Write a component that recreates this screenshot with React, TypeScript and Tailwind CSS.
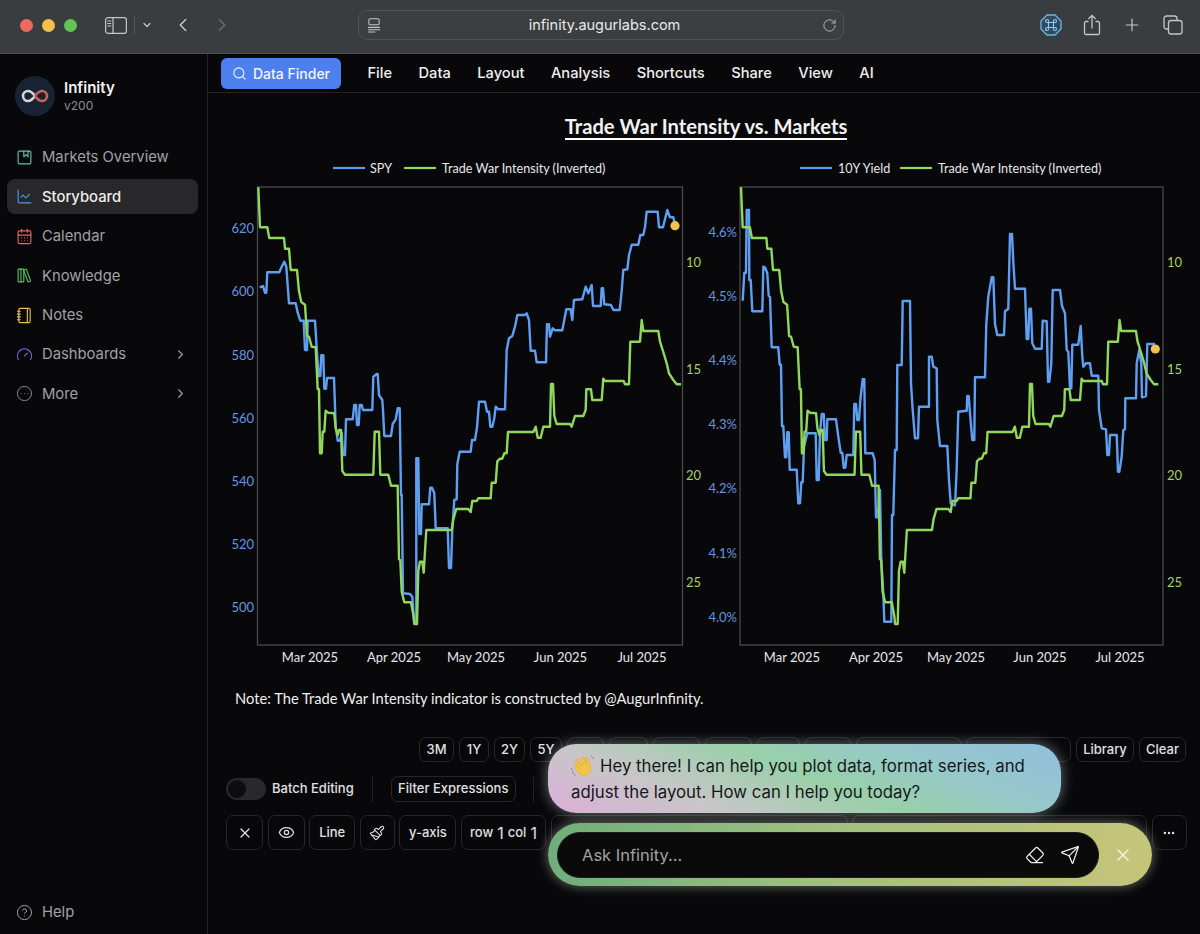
import {
  Album,
  CalendarDays,
  ChartLine,
  ChevronDown,
  ChevronLeft,
  ChevronRight,
  CircleEllipsis,
  CircleHelp,
  Ellipsis,
  Eraser,
  Eye,
  Gauge,
  LibraryBig,
  Notebook,
  Paintbrush,
  Plus,
  RotateCw,
  Search,
  Send,
  X,
} from "lucide-react";
import type { ReactNode } from "react";

// traced from the plots, page coordinates (svg viewBox starts at the chart's page offset)
const tradeWarLeft: [number, number][] = [
  [258.3, 187.3], [260, 227.3], [267.3, 227.3], [269.3, 238], [284, 238], [285, 248.7], [289, 248.7],
  [290.7, 270], [297, 270], [299, 291.3], [301.3, 302], [305, 304.7], [307, 336], [309, 336.7],
  [311.7, 346.7], [315.7, 347.3], [317.7, 389.3], [319, 389.3], [320, 453.3], [321.7, 453.3],
  [322.7, 431.7], [324.3, 431.7], [325.7, 410.7], [328.3, 412.7], [334.3, 413.3], [335.7, 428.3],
  [337.7, 435], [339, 430], [341, 430], [342.3, 471], [345, 474.7], [373.3, 474.7], [374.7, 431.7],
  [379, 431.7], [380.3, 474.7], [388.3, 474.7], [391, 485.7], [397.7, 485.7], [399, 559.3],
  [400.3, 560], [401.7, 591.7], [404.3, 602.3], [411, 602.3], [413.7, 616.7], [414.3, 624], [417, 624],
  [418.3, 570.7], [420, 561.7], [422.3, 561.7], [423.7, 572.7], [426.3, 530], [451.7, 530],
  [453.3, 519.3], [456.3, 509], [468.3, 509], [470.7, 512], [472.3, 501], [476.7, 501], [478.3, 498.3],
  [490.7, 498.3], [491.7, 482.7], [495.7, 482.7], [497.3, 461.3], [500, 458.7], [502.3, 458.7],
  [504.3, 453.3], [506.7, 453.3], [508, 432], [533.3, 432], [535.7, 426.7], [537.7, 437.7],
  [540.7, 437.7], [543.3, 426.7], [550, 426.7], [551, 384], [553, 384], [554.3, 416], [556.7, 424],
  [570, 424], [571.7, 426.7], [575, 416], [583.3, 416], [585.7, 410], [586.3, 389.3], [591, 389.3],
  [592.3, 400], [601.7, 400], [603.3, 378.7], [605, 381], [623.7, 381], [625, 384.3], [629, 384.3],
  [630.3, 341.7], [640, 341.7], [641.7, 320], [643.3, 331], [658.3, 331], [660, 341.7], [663.3, 352],
  [666.7, 363.3], [669, 373.3], [673.3, 380], [676.7, 384.3], [681, 384.3],
];

const tradeWarRight = tradeWarLeft.map(([x, y]): [number, number] => [741 + (x - 258.3) * 0.9873, y]);

const spy: [number, number][] = [
  [259.7, 287.3], [263, 286], [265, 292.7], [266.3, 292.7], [267.3, 272.3], [279.3, 272.3], [281.7, 266.7],
  [284.3, 261.7], [286.3, 266.7], [289, 303.3], [295.7, 303.3], [297.7, 312.7], [300.3, 320.7],
  [303.7, 320.7], [305, 350], [307, 350], [307.7, 320.7], [315, 320.7], [317, 353.3], [318.7, 376],
  [320.3, 376], [321.3, 355.3], [323.3, 355.3], [324.3, 388.7], [326, 388.7], [327, 378], [334, 378],
  [335.7, 426.7], [337.7, 440.7], [340, 440.7], [341.7, 433], [343, 455], [345, 455], [346, 419.3],
  [352.7, 419.3], [354.3, 405], [356, 405], [357, 425], [358.7, 425], [359.7, 405], [361.7, 405],
  [363, 410], [372.3, 410], [373.3, 376.7], [376.7, 374], [377.7, 374], [379, 395], [382.3, 400],
  [383, 410], [384.3, 436], [391, 436], [392.7, 424], [395.7, 419.3], [397.7, 408.3], [399.7, 408.3],
  [401, 495], [401.7, 495], [403, 593.3], [410, 594], [412.3, 596.7], [414, 621.7], [416.3, 624],
  [416.3, 458.3], [418.3, 458.3], [419.3, 534], [421, 534], [421.7, 504.3], [429, 504.3], [430.3, 487.7],
  [432, 487.7], [434.3, 493.3], [435.7, 528.3], [447.7, 528.3], [449, 568], [451, 568], [452.3, 530],
  [454.3, 500], [456.7, 499.3], [457.3, 464.3], [459.7, 451.7], [470.7, 451.7], [472, 440], [475, 440],
  [477, 427.3], [479, 401.7], [485, 401.7], [487, 411.7], [489, 411.7], [490.3, 426.7], [492.3, 426.7],
  [494.3, 418.3], [495.7, 406.7], [498.3, 409.3], [505, 409.3], [506.7, 350], [509, 338.3], [512.3, 336],
  [515, 326.7], [517.3, 315], [525, 315], [526.7, 313.3], [529, 320], [530.7, 350.7], [535, 350.7],
  [536.7, 362.3], [546, 362.3], [547, 324.3], [549, 324.3], [550, 336.7], [552.7, 328.3], [555, 330.3],
  [562.3, 330.3], [564.3, 320], [566.3, 309.3], [570.7, 309.3], [572.3, 320], [574, 300], [582.3, 299.3],
  [585.7, 286.7], [588.3, 293.3], [591.7, 285], [593, 306], [600.7, 306], [601.7, 288.3], [603, 288.3],
  [604.3, 304.3], [611, 305], [613.3, 310], [619.7, 310], [621.7, 290.7], [623.3, 270], [627.3, 269.3],
  [629, 255], [631.7, 244.7], [638.3, 244.7], [640.3, 235], [643.3, 235], [645, 227], [646.7, 211.7],
  [657.7, 211.7], [659, 227.3], [663, 227.3], [667.3, 210], [670, 217.3], [673.3, 217.3], [675, 225],
];

const yield10: [number, number][] = [
  [742.7, 300.7], [744.3, 272.7], [746, 272.7], [746.7, 210], [749, 210], [749.3, 280], [750.7, 280],
  [752.3, 311.3], [762.3, 311.3], [763.3, 266.7], [765, 267.3], [767.3, 273.3], [768.7, 296], [770, 296.7],
  [771.7, 347.3], [778.3, 347.3], [779.7, 364.7], [781, 364.7], [782, 426], [783.3, 426], [785, 457.3],
  [786.3, 457.3], [787.3, 432.3], [788.7, 432.3], [789.7, 469.7], [796.7, 469.7], [798.3, 503.3],
  [800, 503.3], [801.3, 482.3], [802.7, 482.3], [804, 446.7], [807.3, 433.3], [815.7, 433.3], [816.7, 480],
  [818.7, 480], [820, 433.3], [821.7, 414], [823.7, 414], [825, 440], [826.7, 440], [827.3, 419.3],
  [836, 419.3], [838.3, 436.7], [840.7, 452.7], [842.3, 452.7], [843.7, 467.7], [845.3, 467.7],
  [846.7, 455], [853.3, 455], [854.3, 404], [856, 404], [857.3, 420], [859, 420], [860.3, 400],
  [862.7, 379.3], [864.3, 379.3], [865.3, 453.3], [872.7, 453.3], [874.7, 460], [876, 517.3], [878, 517.3],
  [879, 490], [880, 490], [881.3, 560], [883.3, 593.3], [884.3, 621.7], [891.3, 621.7], [892, 515],
  [893.3, 515], [895, 450], [896.7, 450], [897.3, 365], [901.7, 365], [902.7, 301], [910, 301], [911, 383.3],
  [912.7, 410], [915, 438.3], [918, 438.3], [919, 406.7], [929, 406.7], [929, 356.7], [931.7, 356.7],
  [933.3, 366.7], [936.7, 368.3], [937.3, 420], [940, 446], [947.3, 446], [949, 480], [950.7, 503.3],
  [955, 505.3], [956.7, 469], [958.3, 411.7], [966.7, 410.7], [967.3, 396], [968.7, 396], [970, 413.3],
  [972.3, 440], [974.3, 440], [975, 377.3], [985, 377.3], [986.3, 324], [988.3, 296.7], [991.7, 277.3],
  [993.3, 277.3], [995, 324], [997.3, 335], [1004, 335], [1005, 311.3], [1008.3, 308.7], [1010, 234],
  [1012, 234], [1013.3, 262], [1015, 288.7], [1025, 288.7], [1026.7, 339], [1028.3, 339], [1029.3, 308.7],
  [1031, 308.7], [1032.3, 343.3], [1035, 348.7], [1041.7, 348.7], [1042.7, 320.7], [1046.7, 321.3],
  [1048, 381.7], [1049.3, 381.7], [1051.3, 363.3], [1052.7, 290], [1060, 290], [1062, 306], [1065, 313.3],
  [1066.7, 350], [1068.3, 351.7], [1070, 388.3], [1071.3, 388.3], [1072.3, 344.7], [1078.3, 344.7],
  [1080.7, 326], [1082.3, 356.7], [1083.3, 366.7], [1086, 363.3], [1090, 363.3], [1091.7, 375.7],
  [1098.3, 375.7], [1099, 410], [1101.7, 428.3], [1106, 429.3], [1107.3, 455], [1109, 455], [1110, 435],
  [1116.7, 435], [1118, 471.7], [1119.3, 471.7], [1121.7, 456.7], [1123.3, 430], [1125, 429.3],
  [1125.3, 398.3], [1136, 398.3], [1136.7, 363.3], [1139.3, 350], [1141.3, 363.3], [1142, 397.3],
  [1146, 396], [1147.3, 344], [1155, 344],
];

const toPoints = (pts: [number, number][]) => pts.map((p) => p.join(",")).join(" ");

const BLUE = "#5f9ff2";
const GREEN = "#90d75c";

type ChartProps = {
  originX: number;
  plot: [number, number];
  blue: [number, number][];
  green: [number, number][];
  dot: [number, number];
  legend: { label: string; lineX: number; textX: number; greenLineX: number; greenTextX: number };
  leftTicks: [string, number][];
  leftX: number;
  rightX: number;
  monthX: number[];
};

const months = ["Mar 2025", "Apr 2025", "May 2025", "Jun 2025", "Jul 2025"];
const rightTicks: [string, number][] = [["10", 262], ["15", 369], ["20", 475], ["25", 582]];

const Chart = ({ originX, plot, blue, green, dot, legend, leftTicks, leftX, rightX, monthX }: ChartProps) => (
  <svg
    viewBox={`${originX} 150 480 520`}
    className="h-[520px] w-[480px] shrink-0 overflow-visible font-['Lato',sans-serif] text-[13px]"
  >
    <line x1={legend.lineX} x2={legend.lineX + 32} y1="168" y2="168" stroke={BLUE} strokeWidth="2.2" />
    <text x={legend.textX} y="173" fill="#e5e7eb" className="text-[12.6px]">{legend.label}</text>
    <line x1={legend.greenLineX} x2={legend.greenLineX + 32} y1="168" y2="168" stroke={GREEN} strokeWidth="2.2" />
    <text x={legend.greenTextX} y="173" fill="#e5e7eb" className="text-[12.6px]">Trade War Intensity (Inverted)</text>

    <rect x={plot[0]} y="187" width={plot[1] - plot[0]} height="458" fill="none" stroke="#4b4c4e" strokeWidth="1.3" />

    {leftTicks.map(([label, y]) => (
      <text key={label} x={leftX} y={y + 5} textAnchor="end" fill="#6495e0">{label}</text>
    ))}
    {rightTicks.map(([label, y]) => (
      <text key={label} x={rightX} y={y + 5} fill="#a3d165">{label}</text>
    ))}
    {months.map((label, i) => (
      <text key={label} x={monthX[i]} y="662" textAnchor="middle" fill="#e5e7eb">{label}</text>
    ))}

    <polyline points={toPoints(blue)} fill="none" stroke={BLUE} strokeWidth="2.4" strokeLinejoin="round" />
    <polyline points={toPoints(green)} fill="none" stroke={GREEN} strokeWidth="2.4" strokeLinejoin="round" />
    <circle cx={dot[0]} cy={dot[1]} r="4.6" fill="#f2c14e" />
  </svg>
);

const navItems = [
  { label: "Markets Overview", icon: <Album className="h-[17px] w-[17px] text-[#5cc4a6]" strokeWidth={1.6} /> },
  { label: "Storyboard", icon: <ChartLine className="h-[17px] w-[17px] text-[#4d9be6]" strokeWidth={1.6} />, active: true },
  { label: "Calendar", icon: <CalendarDays className="h-[17px] w-[17px] text-[#e4665c]" strokeWidth={1.6} /> },
  { label: "Knowledge", icon: <LibraryBig className="h-[17px] w-[17px] text-[#5ac060]" strokeWidth={1.6} /> },
  { label: "Notes", icon: <Notebook className="h-[17px] w-[17px] text-[#e8c14a]" strokeWidth={1.6} /> },
  { label: "Dashboards", icon: <Gauge className="h-[17px] w-[17px] text-[#7a68f0]" strokeWidth={1.6} />, arrow: true },
  { label: "More", icon: <CircleEllipsis className="h-[17px] w-[17px] text-[#8a8a8a]" strokeWidth={1.4} />, arrow: true },
];

const menuItems = ["File", "Data", "Layout", "Analysis", "Shortcuts", "Share", "View", "AI"];

const Cell = ({ className, children }: { className: string; children?: ReactNode }) => (
  <div
    className={`flex shrink-0 items-center justify-center rounded-[7px] border border-[#26272a] text-[13px] font-medium text-[#e0e0e3] ${className}`}
  >
    {children}
  </div>
);

const Logo = () => (
  <svg viewBox="0 0 40 40" className="h-10 w-10 shrink-0">
    <circle cx="20" cy="20" r="20" fill="#172333" />
    <path d="M20 20c-2.500-3.400-4.600-5-7-5a5 5 0 0 0 0 10c2.400 0 4.500-1.600 7-5" fill="none" stroke="#cfd6de" strokeWidth="2.6" />
    <path d="M20 20c2.500-3.400 4.600-5 7-5a5 5 0 0 1 0 10c-2.400 0-4.500-1.600-7-5" fill="none" stroke="#c9615a" strokeWidth="2.6" />
  </svg>
);

const WaveHand = () => (
  <svg viewBox="0 0 24 24" className="absolute left-0 top-[1px] h-[24px] w-[24px]">
    <path
      d="M7 5.500 12.500 11 10 4.500c-.6-1.600 1.400-2.400 2.200-1L15.500 10l-1.200-5.500c-.3-1.700 1.900-2.100 2.400-.6l2.600 8c1.300 4.500-.4 8-3.800 9.300-3 1.100-5.500.2-7.500-1.800L3.500 14c-1.100-1.200.4-2.700 1.700-1.700L9 15.500 4.300 9.500C3.300 8.200 5 6.700 6.200 7.800L11 12.500 5.800 6.800C4.800 5.500 6 4.300 7 5.500Z"
      fill="#f6c445"
      stroke="#e0a030"
      strokeWidth=".5"
    />
    <path d="M1.500 17.500c.4 1.700 1.300 3 2.700 3.800M.6 14.500l.7 1.200M20 2.200c1.300.5 2.200 1.400 2.700 2.700" fill="none" stroke="#7a8a96" strokeWidth="1" strokeLinecap="round" />
  </svg>
);

export default function App() {
  return (
    <div className="relative flex h-[934px] w-[1200px] flex-col overflow-hidden bg-[#08080b] font-['Inter',sans-serif] text-white">
      {/* safari toolbar */}
      <header className="flex h-[54px] shrink-0 items-center border-b border-[#4c4f52] bg-[#3a3d40] pb-[3px] pl-[20px] text-[#c4c6c8]">
        <div className="flex gap-[9px]">
          <span className="h-[13px] w-[13px] rounded-full bg-[#ec6a5e]" />
          <span className="h-[13px] w-[13px] rounded-full bg-[#f4bf4f]" />
          <span className="h-[13px] w-[13px] rounded-full bg-[#61c554]" />
        </div>
        <svg viewBox="0 0 22 17" className="ml-[28px] h-[17px] w-[22px]" fill="none" stroke="currentColor" strokeWidth="1.2">
          <rect x=".6" y=".6" width="20.800" height="15.800" rx="2.500" />
          <path d="M8 .6v15.800" />
          <path d="M2.800 4h3M2.800 6.500h3M2.800 9h3" strokeLinecap="round" />
        </svg>
        <div className="ml-[7px] h-[18px] w-px bg-[#55585b]" />
        <ChevronDown className="ml-[6px] h-[12px] w-[12px]" strokeWidth={2.4} />
        <ChevronLeft className="ml-[19px] h-[22px] w-[22px]" strokeWidth={1.6} />
        <ChevronRight className="ml-[17px] h-[22px] w-[22px] text-[#6b6e70]" strokeWidth={1.6} />
        <div className="ml-[125px] flex h-[30px] w-[486px] items-center justify-between rounded-[9px] border border-[#505356] bg-[#3c3f42] pl-[8px] pr-[6px]">
          <svg viewBox="0 0 14 16" className="h-[15px] w-[14px]" fill="none" stroke="currentColor" strokeWidth="1.1">
            <rect x="1.500" y=".8" width="11" height="6.500" rx="1.500" />
            <path d="M1 10h12M1 12.500h12M1 15h7" strokeLinecap="round" />
          </svg>
          <span className="pl-[6px] text-[14.500px] text-[#e8e8e8]">infinity.augurlabs.com</span>
          <RotateCw className="h-[15px] w-[15px]" strokeWidth={1.4} />
        </div>
        <svg viewBox="0 0 22 22" className="ml-[196px] h-[22px] w-[22px]" fill="none">
          <path d="M7 1h8l6 6v8l-6 6H7l-6-6V7Z" fill="#2f4a5e" stroke="#6cb6e8" strokeWidth="1.300" />
          <path
            d="M8.500 8.500h5v5h-5Zm0 0H7a1.500 1.500 0 1 1 1.500-1.500Zm5 0V7A1.500 1.500 0 1 1 15 8.500Zm0 5H15a1.500 1.500 0 1 1-1.500 1.500Zm-5 0V15A1.500 1.500 0 1 1 7 13.500Z"
            stroke="#8ecbf2"
            strokeWidth="1.100"
          />
        </svg>
        <svg viewBox="0 0 18 22" className="ml-[21px] h-[22px] w-[18px]" fill="none" stroke="currentColor" strokeWidth="1.300">
          <path d="M5.500 7.500H3a1.500 1.500 0 0 0-1.500 1.500v10A1.500 1.500 0 0 0 3 20.500h12a1.500 1.500 0 0 0 1.500-1.500V9A1.500 1.500 0 0 0 15 7.500h-2.500" />
          <path d="M9 14V1.500M5.800 4.500 9 1.300l3.200 3.200" strokeLinecap="round" />
        </svg>
        <Plus className="ml-[21px] h-[20px] w-[20px]" strokeWidth={1.4} />
        <svg viewBox="0 0 20 20" className="ml-[21px] h-[20px] w-[20px]" fill="none" stroke="currentColor" strokeWidth="1.300">
          <rect x="5.500" y="5.500" width="13.500" height="13.500" rx="2.500" />
          <path d="M14 5.500V3.500a2.500 2.500 0 0 0-2.500-2.500H3.500A2.500 2.500 0 0 0 1 3.500v8A2.500 2.500 0 0 0 3.500 14h2" />
        </svg>
      </header>

      <div className="flex min-h-0 flex-1">
        {/* sidebar */}
        <aside className="relative flex w-[208px] shrink-0 flex-col border-r border-[#232326] pl-[7px] pr-[9px]">
          <div className="ml-[8px] mt-[22px] flex items-center gap-[9px]">
            <Logo />
            <div className="flex flex-col">
              <span className="text-[15px] font-semibold leading-[20px] text-[#f2f2f2]">Infinity</span>
              <span className="text-[12px] leading-[16px] text-[#8c8c90]">v200</span>
            </div>
          </div>
          <nav className="mt-[24px] flex flex-col gap-[4.400px]">
            {navItems.map((item) => (
              <div
                key={item.label}
                className={`flex h-[35px] items-center gap-[9px] rounded-lg pl-[9px] pr-[10px] text-[14.800px] ${
                  item.active ? "bg-[#28282b] font-medium text-[#ededed]" : "text-[#a0a0a4]"
                }`}
              >
                {item.icon}
                <span className="flex-1">{item.label}</span>
                {item.arrow && <ChevronRight className="h-[15px] w-[15px]" strokeWidth={1.8} />}
              </div>
            ))}
          </nav>
          <div className="mt-auto mb-[10px] flex h-[24px] items-center gap-[9px] pl-[9px] text-[14.800px] text-[#a0a0a4]">
            <CircleHelp className="h-[17px] w-[17px]" strokeWidth={1.4} />
            Help
          </div>
        </aside>

        <main className="flex min-w-0 flex-1 flex-col">
          <div className="flex h-[39px] shrink-0 items-center gap-[26.400px] border-b border-[#232326] pl-[13px]">
            <div className="flex h-[31px] w-[120px] items-center justify-center gap-[6px] rounded-md bg-[#4d7fee] text-[14px] font-medium text-[#f4f6fb]">
              <Search className="h-[15px] w-[15px]" strokeWidth={1.8} />
              Data Finder
            </div>
            {menuItems.map((label) => (
              <span key={label} className="text-[14.700px] font-medium text-[#eeeeee]">{label}</span>
            ))}
          </div>

          <div className="flex h-[57px] shrink-0 items-start justify-center pl-[4px] pt-[21px]">
            <h1 className="border-b-2 border-white font-['Lato',sans-serif] text-[20.200px] font-bold leading-[24px] text-[#f2f2f2]">
              Trade War Intensity vs. Markets
            </h1>
          </div>

          <div className="ml-[17px] flex shrink-0 gap-[5px]">
            <Chart
              originX={225}
              plot={[257.5, 682.5]}
              blue={spy}
              green={tradeWarLeft}
              dot={[675, 225.7]}
              legend={{ label: "SPY", lineX: 333, textX: 370, greenLineX: 404, greenTextX: 442 }}
              leftTicks={[["620", 228], ["600", 291], ["580", 355], ["560", 418], ["540", 481], ["520", 544], ["500", 607]]}
              leftX={254}
              rightX={686}
              monthX={[310, 394, 476, 560.5, 642]}
            />
            <Chart
              originX={710}
              plot={[740, 1163]}
              blue={yield10}
              green={tradeWarRight}
              dot={[1155.3, 349]}
              legend={{ label: "10Y Yield", lineX: 800, textX: 838, greenLineX: 900, greenTextX: 938 }}
              leftTicks={[["4.6%", 232], ["4.5%", 296], ["4.4%", 360], ["4.3%", 424], ["4.2%", 488], ["4.1%", 552.5], ["4.0%", 617]]}
              leftX={737}
              rightX={1167}
              monthX={[792, 876, 956, 1040, 1120]}
            />
          </div>

          <p className="ml-[27px] mt-[18px] h-[20px] shrink-0 font-['Lato',sans-serif] text-[14.700px] leading-[20px] text-[#eeeeee]">
            Note: The Trade War Intensity indicator is constructed by @AugurInfinity.
          </p>

          <div className="mt-[29px] flex h-[25px] shrink-0 justify-end gap-[5px] pr-[14px]">
            <Cell className="w-[35px]">3M</Cell>
            <Cell className="w-[30px]">1Y</Cell>
            <Cell className="w-[31px]">2Y</Cell>
            <Cell className="w-[32px]">5Y</Cell>
            <Cell className="w-[37px]" />
            <Cell className="w-[39px]" />
            <Cell className="w-[47px]" />
            <Cell className="w-[47px]" />
            <Cell className="w-[43px]" />
            <Cell className="w-[46px]" />
            <Cell className="w-[105px]" />
            <Cell className="w-[105px]" />
            <Cell className="w-[58px]">Library</Cell>
            <Cell className="w-[47px]">Clear</Cell>
          </div>

          <div className="ml-[18px] mt-[14px] flex h-[26px] shrink-0 items-center">
            <div className="h-[22px] w-[40px] rounded-full bg-[#29292c] p-[2px]">
              <div className="h-[18px] w-[18px] rounded-full bg-[#0d0d10]" />
            </div>
            <span className="ml-[6px] text-[13px] font-medium text-[#e0e0e3]">Batch Editing</span>
            <div className="ml-[18px] h-[26px] w-px bg-[#232326]" />
            <Cell className="ml-[18px] h-[26px] w-[125px]">Filter Expressions</Cell>
            <div className="ml-[17px] h-[26px] w-px bg-[#232326]" />
          </div>

          <div className="ml-[18px] mt-[13px] flex h-[35px] shrink-0 gap-[4.600px]">
            <Cell className="w-[37px]"><X className="h-[16px] w-[16px]" strokeWidth={1.8} /></Cell>
            <Cell className="w-[37px]"><Eye className="h-[17px] w-[17px]" strokeWidth={1.8} /></Cell>
            <Cell className="w-[46px]">Line</Cell>
            <Cell className="w-[35px]"><Paintbrush className="h-[16px] w-[16px]" strokeWidth={1.6} /></Cell>
            <Cell className="w-[57px]">y-axis</Cell>
            <Cell className="w-[85px] gap-[4px]">
              <span>row</span><span className="text-[16px] font-normal">1</span>
              <span>col</span><span className="text-[16px] font-normal">1</span>
            </Cell>
            <Cell className="w-[297px]" />
            <Cell className="w-[295px]" />
            <Cell className="w-[35px]"><Ellipsis className="h-[14px] w-[14px]" strokeWidth={2.2} /></Cell>
          </div>
        </main>
      </div>

      {/* chat overlay */}
      <div className="absolute left-[548px] top-[744px] h-[69px] w-[513px] rounded-[28px] bg-[linear-gradient(22deg,#dbaed8_0%,#c8c6c8_26%,#98d0a8_52%,#96c8cc_75%,#92bfdc_100%)] px-[23px] py-[9px] text-[16.800px] leading-[26px] text-[#15171a] shadow-[0_0_14px_rgba(225,240,235,0.45)]">
        <p className="relative">
          <WaveHand />
          <span className="pl-[29px]">Hey there! I can help you plot data, format series, and</span>
          <br />
          adjust the layout. How can I help you today?
        </p>
      </div>

      <div className="absolute left-[548px] top-[823px] h-[63px] w-[604px] rounded-full bg-[linear-gradient(90deg,#6fae7c_0%,#a0c080_45%,#c6c578_100%)] p-[9px] shadow-[0_0_12px_rgba(230,240,210,0.45)]">
        <div className="flex h-[46px] w-[542px] items-center rounded-full border border-[#1c1c1c] bg-[#0a0a0b] pl-[24px] pr-[18px]">
          <span className="flex-1 pt-[1px] text-[16.500px] text-[#a2a2a2]">Ask Infinity...</span>
          <Eraser className="h-[20px] w-[20px] text-[#ececec]" strokeWidth={1.5} />
          <Send className="ml-[15px] h-[20px] w-[20px] text-[#ececec]" strokeWidth={1.5} />
        </div>
        <X className="absolute left-[565px] top-[22px] h-[20px] w-[20px] text-[#f0f0e0]" strokeWidth={1.8} />
      </div>
    </div>
  );
}
